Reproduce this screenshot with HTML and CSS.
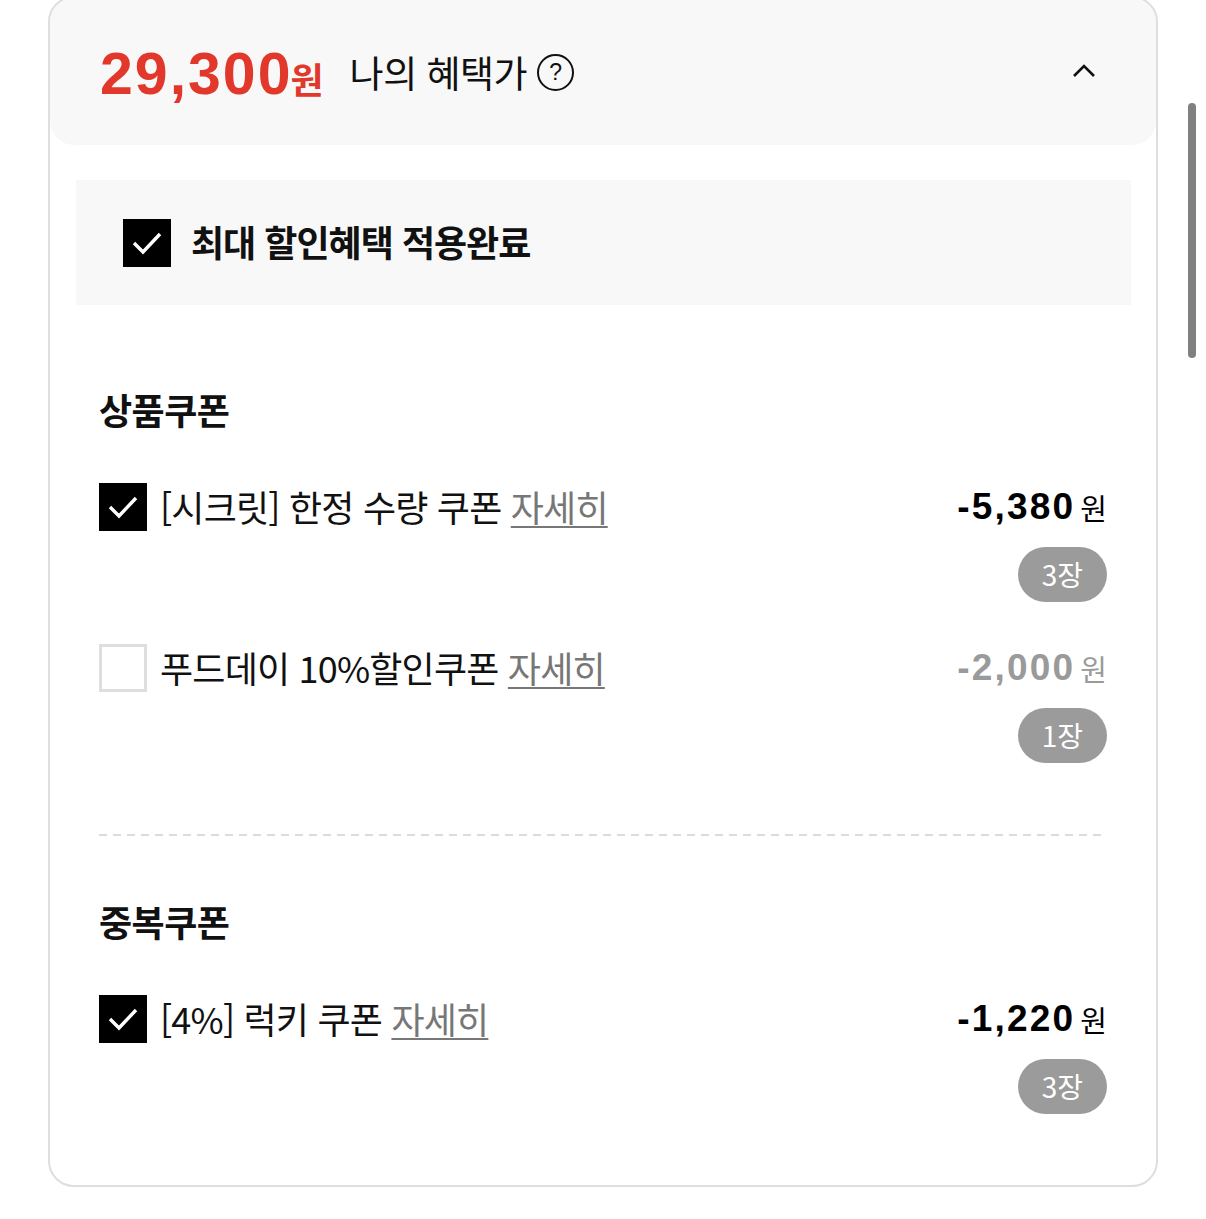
FILE: index.html
```html
<!DOCTYPE html>
<html lang="ko">
  <head>
    <meta charset="UTF-8" />
    <meta name="viewport" content="width=device-width, initial-scale=1.0" />
    <title>나의 혜택가</title>
    <link rel="stylesheet" href="styles.css">
  </head>
  <body>
    <div class="card">
      <div class="summary">
        <span class="price">29,300<span class="won">원</span></span>
        <span class="summary-label">나의 혜택가</span>
        <span class="help">?</span>
        <svg class="chevron" width="24" height="16" viewBox="0 0 24 16">
          <polyline points="2,13 12,3 22,13" fill="none" stroke="#111" stroke-width="2.6" />
        </svg>
      </div>

      <div class="max-benefit">
        <span class="check checked">
          <svg width="48" height="48" viewBox="0 0 48 48">
            <polyline points="11,24 20,33 37,15" fill="none" stroke="#fff" stroke-width="3.4" />
          </svg>
        </span>
        <span class="max-benefit-text">최대 할인혜택 적용완료</span>
      </div>

      <div class="section first">
        <h2>상품쿠폰</h2>

        <div class="row">
          <div class="row-left">
            <span class="check checked">
              <svg width="48" height="48" viewBox="0 0 48 48">
                <polyline points="11,24 20,33 37,15" fill="none" stroke="#fff" stroke-width="3.4" />
              </svg>
            </span>
            <span class="coupon-name">[시크릿] 한정 수량 쿠폰 <a href="#" class="detail">자세히</a></span>
          </div>
          <div class="row-right">
            <span class="amount">-5,380<span class="unit">원</span></span>
            <span class="badge">3장</span>
          </div>
        </div>

        <div class="row">
          <div class="row-left">
            <span class="check"></span>
            <span class="coupon-name">푸드데이 10%할인쿠폰 <a href="#" class="detail">자세히</a></span>
          </div>
          <div class="row-right">
            <span class="amount off">-2,000<span class="unit">원</span></span>
            <span class="badge">1장</span>
          </div>
        </div>
      </div>

      <div class="divider"></div>

      <div class="section">
        <h2>중복쿠폰</h2>

        <div class="row">
          <div class="row-left">
            <span class="check checked">
              <svg width="48" height="48" viewBox="0 0 48 48">
                <polyline points="11,24 20,33 37,15" fill="none" stroke="#fff" stroke-width="3.4" />
              </svg>
            </span>
            <span class="coupon-name">[4%] 럭키 쿠폰 <a href="#" class="detail">자세히</a></span>
          </div>
          <div class="row-right">
            <span class="amount">-1,220<span class="unit">원</span></span>
            <span class="badge">3장</span>
          </div>
        </div>
      </div>
    </div>

    <div class="scroll-thumb"></div>
  </body>
</html>
```

FILE: styles.css
```css
body {
  margin: 0;
  background: #fff;
  font-family: "Noto Sans CJK KR", "Noto Sans", sans-serif;
  color: #111;
  overflow: hidden;
}

.card {
  box-sizing: border-box;
  width: 1110px;
  margin: -4px 0 0 48px;
  border: 2px solid #dedede;
  border-radius: 26px;
  background: #fff;
  overflow: hidden;
}

.summary {
  box-sizing: border-box;
  height: 147px;
  padding: 4px 60px 0 50px;
  background: #f8f8f8;
  border-radius: 24px;
  display: flex;
  align-items: center;
}

.price {
  font-family: "Liberation Sans", Arial, sans-serif;
  font-weight: bold;
  font-size: 59px;
  letter-spacing: 2px;
  line-height: 1;
  color: #e2372b;
  margin-top: 2px;
}

.price .won {
  font-family: "Noto Sans CJK KR", sans-serif;
  font-size: 36px;
  letter-spacing: 0;
  margin-left: -2px;
}

.summary-label {
  font-size: 37px;
  line-height: 1;
  margin-left: 26px;
  margin-top: -3px;
  letter-spacing: -0.5px;
}

.help {
  box-sizing: border-box;
  width: 37px;
  height: 37px;
  margin-left: 10px;
  margin-top: -2px;
  border: 2px solid #111;
  border-radius: 50%;
  font-family: "Liberation Sans", Arial, sans-serif;
  font-size: 23px;
  line-height: 33px;
  text-align: center;
}

.chevron {
  margin-left: auto;
  margin-top: -6px;
}

.max-benefit {
  height: 125px;
  margin: 35px 25px 0 26px;
  padding-left: 47px;
  background: #f8f8f8;
  display: flex;
  align-items: center;
  gap: 20px;
}

.max-benefit-text {
  font-size: 36px;
  font-weight: bold;
  letter-spacing: -1px;
  line-height: 1;
  margin-top: -4px;
}

.check {
  box-sizing: border-box;
  flex: none;
  width: 48px;
  height: 48px;
  border: 3px solid #dedede;
  background: #fff;
}

.check.checked {
  border: none;
  background: #000;
}

.check svg {
  display: block;
}

.section {
  padding: 67px 49px 71px;
}

.section.first {
  padding-top: 86px;
  padding-bottom: 71px;
}

.section h2 {
  margin: 0 0 56px;
  font-size: 36px;
  line-height: 36px;
  letter-spacing: -0.5px;
  font-weight: bold;
}

.row {
  display: flex;
  justify-content: space-between;
  align-items: flex-start;
  margin-top: 42px;
}

.section h2 + .row {
  margin-top: 0;
}

.row-left {
  height: 48px;
  display: flex;
  align-items: center;
  gap: 13px;
}

.coupon-name {
  font-size: 36px;
  line-height: 1;
  letter-spacing: -0.8px;
  white-space: nowrap;
  margin-top: -2px;
}

.detail {
  color: #777;
  text-decoration: underline;
  text-underline-offset: 4px;
  text-decoration-thickness: 2px;
}

.row-right {
  display: flex;
  flex-direction: column;
  align-items: flex-end;
}

.amount {
  height: 48px;
  display: flex;
  align-items: center;
  font-family: "Liberation Sans", Arial, sans-serif;
  font-weight: bold;
  font-size: 37px;
  letter-spacing: 2.2px;
  color: #000;
}

.amount .unit {
  font-family: "Noto Sans CJK KR", sans-serif;
  font-weight: normal;
  font-size: 29px;
  letter-spacing: 0;
  margin-left: 5px;
}

.amount.off {
  color: #9a9a9a;
}

.badge {
  margin-top: 16px;
  height: 55px;
  padding: 0 24px;
  border-radius: 28px;
  background: #9b9b9b;
  color: #fff;
  font-size: 28px;
  line-height: 55px;
}

.divider {
  height: 2px;
  margin: 0 49px;
  background: repeating-linear-gradient(to right, #dcdcdc 0 8px, transparent 8px 14px);
}

/* overlay scroll indicator from the phone capture */
.scroll-thumb {
  position: fixed;
  top: 103px;
  right: 10px;
  width: 8px;
  height: 255px;
  border-radius: 4px;
  background: #808080;
}
```
